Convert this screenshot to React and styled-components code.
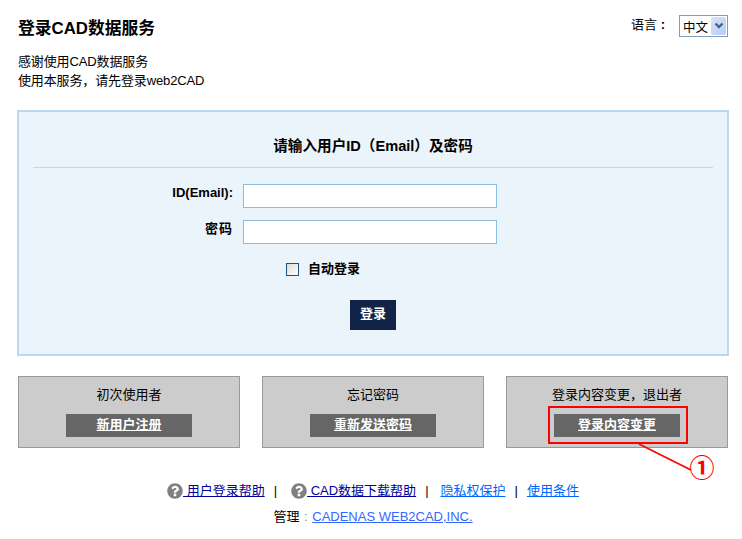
import styled, { createGlobalStyle } from "styled-components";
import { FaQuestionCircle } from "react-icons/fa";

const GlobalStyle = createGlobalStyle`
  body {
    margin: 0;
    background: #fff;
    color: #000;
    font-family: "Liberation Sans", "Noto Sans CJK SC", sans-serif;
    font-size: 13px;
  }
`;

const Page = styled.div`
  width: 712px;
  margin-left: 17px;
`;

const Header = styled.header`
  display: flex;
  justify-content: space-between;
  height: 37px;
  padding: 15px 1px 0;
`;

const Title = styled.h1`
  margin: 0;
  padding-top: 1px;
  font-size: 16.8px;
  line-height: 26px;
  font-weight: bold;
`;

const Lang = styled.div`
  position: relative;
  display: flex;
  align-items: flex-start;
  height: 22px;
  gap: 14px;
`;

const LangLabel = styled.span`
  line-height: 20px;
`;

const LangSelect = styled.select`
  appearance: none;
  width: 49px;
  height: 22px;
  padding: 0 0 0 3px;
  border: 1px solid #7f9db9;
  border-radius: 0;
  background: #fff;
  color: #000;
  font: 12.5px "Noto Sans CJK SC", sans-serif;
`;

const LangArrow = styled.span`
  position: absolute;
  right: 2px;
  top: 2px;
  width: 15px;
  height: 18px;
  display: flex;
  align-items: center;
  justify-content: center;
  background: linear-gradient(135deg, #d6e3fb, #b5cdf7);
  border-radius: 2px;
  pointer-events: none;
`;

const Intro = styled.p`
  margin: 0;
  height: 58px;
  padding-left: 1px;
  line-height: 19px;
  letter-spacing: -0.13px;
`;

const Panel = styled.form`
  height: 242px;
  border: 2px solid #bcd8ee;
  background: #ebf3fb;
`;

const PanelTitle = styled.h2`
  margin: 0 14px 16px;
  padding: 24px 0 11px;
  border-bottom: 1px solid #c3d8e8;
  font-size: 14.6px;
  line-height: 20px;
  font-weight: bold;
  text-align: center;
`;

const Row = styled.div`
  display: flex;
  align-items: flex-start;
  gap: 10px;
  margin-bottom: 12px;
`;

const Label = styled.label`
  width: 214px;
  text-align: right;
  font-weight: bold;
  line-height: 18px;
  letter-spacing: ${(p) => p.$spacing || 0}px;
`;

const Input = styled.input`
  box-sizing: border-box;
  width: 254px;
  height: 24px;
  border: 1px solid #8bbde0;
  background: #fff;
`;

const RememberRow = styled.div`
  display: flex;
  align-items: center;
  gap: 9px;
  height: 20px;
  margin-top: 15px;
  padding-left: 267px;
  font-weight: bold;
`;

const RememberText = styled.span`
  margin-top: -3px;
`;

const Checkbox = styled.span`
  box-sizing: border-box;
  width: 13px;
  height: 13px;
  border: 1px solid #1c5180;
  background: linear-gradient(135deg, #dcdcd7, #fff);
`;

const SubmitButton = styled.button`
  display: block;
  width: 46px;
  height: 30px;
  margin: 21px auto 0;
  padding: 0 0 5px;
  border: 0;
  background: #112448;
  color: #fff;
  font: bold 13px "Noto Sans CJK SC", sans-serif;
`;

const Cards = styled.div`
  display: grid;
  grid-template-columns: repeat(3, 222px);
  gap: 22px;
  margin: 20px 1px 0;
`;

const CardBox = styled.div`
  box-sizing: border-box;
  height: 72px;
  padding-top: 8px;
  border: 1px solid #999;
  background: #ccc;
  text-align: center;
`;

const CardTitle = styled.div`
  height: 20px;
  line-height: 20px;
`;

const CardLink = styled.a`
  position: relative;
  display: block;
  width: 126px;
  height: 23px;
  margin: 9px auto 0;
  background: #666;
  color: #fff;
  font-weight: bold;
  line-height: 22px;
  text-decoration: underline;
`;

const Highlight = styled.span`
  position: absolute;
  left: -6px;
  right: -8px;
  top: -8px;
  bottom: -7px;
  border: 2px solid #f00;
`;

const Leader = styled.svg`
  position: absolute;
  left: 85px;
  top: 30px;
  overflow: visible;
`;

const Callout = styled.span`
  position: absolute;
  left: 135px;
  top: 39px;
  width: 26px;
  height: 26px;
  color: #f00;
  font: bold 25px/26px "Noto Sans CJK SC", sans-serif;
  text-align: center;
  display: inline-block;
`;

const Footer = styled.footer`
  margin-top: 34px;
  text-align: center;
`;

const HelpRow = styled.div`
  display: flex;
  justify-content: center;
  align-items: center;
  height: 18px;
  line-height: 18px;
`;

const HelpLink = styled.a`
  display: inline-flex;
  align-items: center;
  color: ${(p) => p.$color};
  text-decoration: underline;
  white-space: pre;
`;

const HelpIcon = styled(FaQuestionCircle)`
  width: 16px;
  height: 16px;
  color: #808080;
`;

const Sep = styled.span`
  margin: 0 ${(p) => p.$after}px 0 9px;
`;

const Admin = styled.div`
  margin-top: 8px;
  line-height: 18px;
`;

const AdminLink = styled.a`
  color: #3366ff;
  text-decoration: underline;
`;

const Colon = styled.span`
  margin: 0 1px;
  color: #888;
`;

const cards = [
  { title: "初次使用者", action: "新用户注册" },
  { title: "忘记密码", action: "重新发送密码" },
  { title: "登录内容变更，退出者", action: "登录内容变更", marked: true },
];

const App = () => {
  return (
    <Page>
      <GlobalStyle />
      <Header>
        <Title>登录CAD数据服务</Title>
        <Lang>
          <LangLabel>
            语言 <b>:</b>
          </LangLabel>
          <LangSelect defaultValue="zh">
            <option value="zh">中文</option>
          </LangSelect>
          <LangArrow>
            <svg width="10" height="8" viewBox="0 0 10 8">
              <path d="M1.5 1.5 5 5l3.5-3.5" fill="none" stroke="#4d6185" strokeWidth="2.4" />
            </svg>
          </LangArrow>
        </Lang>
      </Header>
      <Intro>
        感谢使用CAD数据服务
        <br />
        使用本服务，请先登录web2CAD
      </Intro>
      <Panel>
        <PanelTitle>请输入用户ID（Email）及密码</PanelTitle>
        <Row>
          <Label>ID(Email):</Label>
          <Input type="text" />
        </Row>
        <Row>
          <Label $spacing={1}>密码</Label>
          <Input type="password" />
        </Row>
        <RememberRow>
          <Checkbox />
          <RememberText>自动登录</RememberText>
        </RememberRow>
        <SubmitButton type="button">登录</SubmitButton>
      </Panel>
      <Cards>
        {cards.map((card) => (
          <CardBox key={card.title}>
            <CardTitle>{card.title}</CardTitle>
            <CardLink href="#">
              {card.action}
              {card.marked && (
                <>
                  <Highlight />
                  <Leader width="54" height="28" viewBox="0 0 54 28">
                    <path d="M0 0 52 26" stroke="#f00" strokeWidth="1.6" />
                  </Leader>
                  <Callout>①</Callout>
                </>
              )}
            </CardLink>
          </CardBox>
        ))}
      </Cards>
      <Footer>
        <HelpRow>
          <HelpLink href="#" $color="#000099">
            <HelpIcon /> 用户登录帮助
          </HelpLink>
          <Sep $after={14}>|</Sep>
          <HelpLink href="#" $color="#000099">
            <HelpIcon /> CAD数据下载帮助
          </HelpLink>
          <Sep $after={12}>|</Sep>
          <HelpLink href="#" $color="#0066ff">
            隐私权保护
          </HelpLink>
          <Sep $after={9}>|</Sep>
          <HelpLink href="#" $color="#0066ff">
            使用条件
          </HelpLink>
        </HelpRow>
        <Admin>
          管理 <Colon>:</Colon> <AdminLink href="#">CADENAS WEB2CAD,INC.</AdminLink>
        </Admin>
      </Footer>
    </Page>
  );
};

export default App;
